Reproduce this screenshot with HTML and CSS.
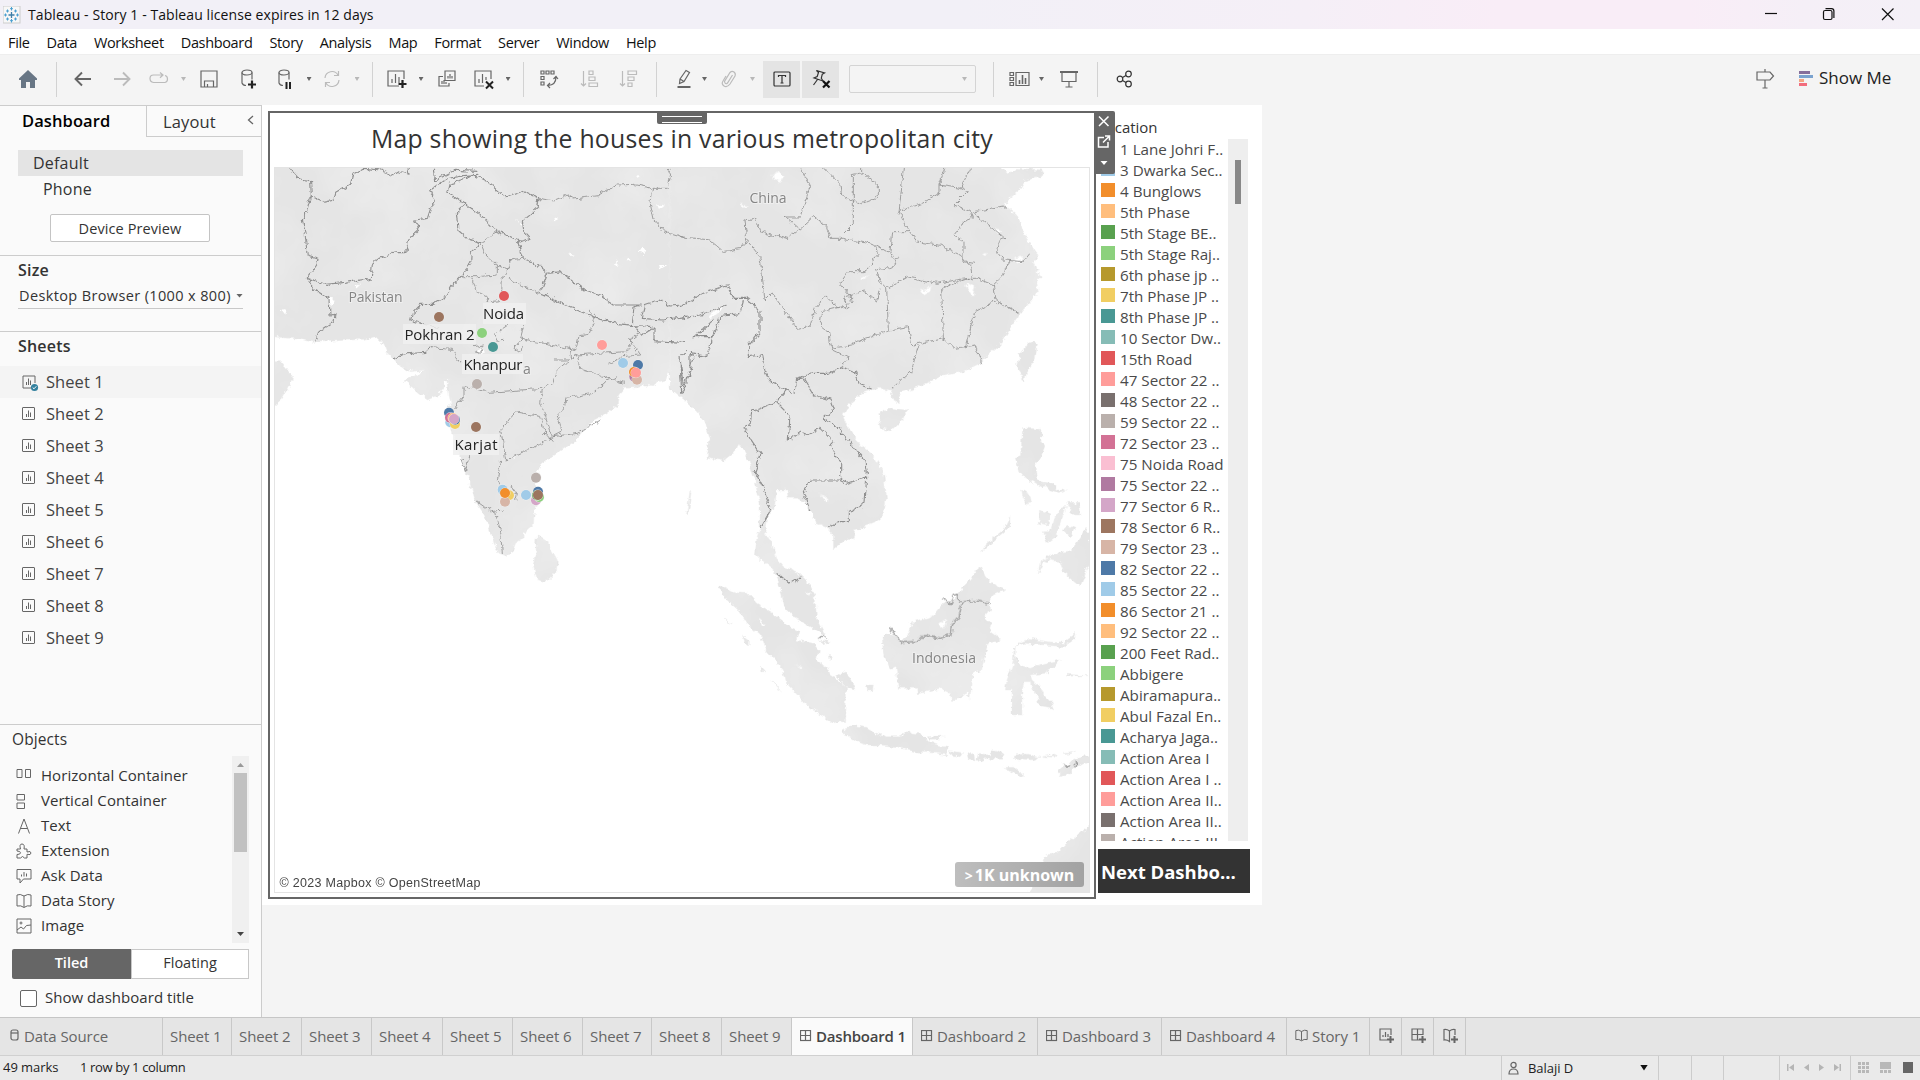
FILE: index.html
```html
<!DOCTYPE html>
<html lang="en">
<head>
<meta charset="utf-8">
<title>Tableau - Story 1</title>
<link rel="stylesheet" href="styles.css">
</head>
<body>
<svg class="defs" width="0" height="0">
  <symbol id="sheet" viewBox="0 0 14 14"><rect x=".5" y=".5" width="12" height="12" rx=".5"/><path d="M4.500 10V7M6.500 10V3.500M8.500 10V5.500"/></symbol>
  <symbol id="dash" viewBox="0 0 12 12"><rect x=".5" y=".5" width="10" height="10"/><path d="M5.500 .5v10M.5 5.500h10"/></symbol>
  <symbol id="book" viewBox="0 0 16 16"><path d="M8 3Q4 .5 1 2v11q4-1 7 1.500Q11 12 15 13V2q-3-1.500-7 1zM8 3v11"/></symbol>
</svg>

<header class="titlebar">
  <svg class="logo" width="18" height="18" viewBox="0 0 18 18"><rect width="17" height="17" fill="#f7f7f7" stroke="#ccc"/><path d="M8.500 6v6M5.500 9h6" stroke="#3f7fa8" stroke-width="1.300"/><path d="M8.500 1v3.500M7 2.700h3M8.500 13v3.500M7 14.700h3M1 9h3M2.500 7.500v3M13 9h3M14.500 7.500v3M4.500 3.500v3M3 5h3M12.500 3.500v3M11 5h3M4.500 11.500v3M3 13h3M12.500 11.500v3M11 13h3" stroke="#4a9fd0" fill="none"/></svg>
  <span class="title">Tableau - Story 1 - Tableau license expires in 12 days</span>
  <svg class="winbtns" width="130" height="16" viewBox="0 0 130 16" fill="none" stroke="#111" stroke-width="1.200"><path d="M0 7.500h12"/><rect x="58.500" y="4.500" width="8.500" height="9" rx="1.500"/><path d="M60.500 2.600h6q2.400 0 2.400 2.400v7"/><path d="M117 2.500l11.500 11.500M128.500 2.500L117 14"/></svg>
</header>

<nav class="menubar"><span>File</span><span>Data</span><span>Worksheet</span><span>Dashboard</span><span>Story</span><span>Analysis</span><span>Map</span><span>Format</span><span>Server</span><span>Window</span><span>Help</span></nav>

<div class="toolbar">
  <svg width="20" height="20" viewBox="0 0 20 20"><path d="M10 1L1 9.500V11h2v8h5v-6h4v6h5v-8h2V9.500z" fill="#687685"/></svg>
  <i class="sep"></i>
  <svg class="ic" width="18" height="16" viewBox="0 0 18 16"><path stroke-width="1.900" d="M1.500 8H17M8 1.500L1.500 8 8 14.500"/></svg>
  <svg class="ic off" width="18" height="16" viewBox="0 0 18 16"><path stroke-width="1.900" d="M1 8h15.500M10 1.500L16.500 8 10 14.500"/></svg>
  <svg class="ic off" width="20" height="14" viewBox="0 0 20 14"><path d="M14 3H4.500Q1 3 1 6.500T4.500 10.500H16q2.500-.5 2.500-3.500T16 3.500M11 .5L14 3l-3 2.700"/></svg>
  <i class="caret off"></i>
  <svg class="ic" width="18" height="18" viewBox="0 0 18 18"><path d="M1 1h16v16H1zM4.500 17v-6h9v6M7.500 17v-3"/></svg>
  <svg class="ic" width="18" height="22" viewBox="0 0 18 22"><ellipse cx="8" cy="4.500" rx="5" ry="2.500"/><path d="M3 4.500V15q1 2.500 4 2.500M13 4.500v7"/><path d="M13 12.500v8M9 16.500h8" stroke="#222" stroke-width="2.200"/></svg>
  <svg class="ic" width="18" height="22" viewBox="0 0 18 22"><ellipse cx="8" cy="4.500" rx="5" ry="2.500"/><path d="M3 4.500V15q1 2.500 4 2.500M13 4.500v7"/><path d="M10.500 14v7M14 14v7" stroke="#222" stroke-width="2"/></svg>
  <i class="caret"></i>
  <svg class="ic off" width="20" height="18" viewBox="0 0 20 18"><path d="M3 8a7 7 0 0 1 13-3M17 10A7 7 0 0 1 4 13M16.500 1v4.500H12M3.500 17v-4.500H8"/></svg>
  <i class="caret off"></i>
  <i class="sep"></i>
  <svg class="ic" width="20" height="20" viewBox="0 0 20 20"><path d="M17 10V2H1v15h11M5 14V10M8.500 14V5M12 14V8"/><path d="M15.500 11v8M11.500 15h8" stroke="#222" stroke-width="2.200"/></svg>
  <i class="caret"></i>
  <svg class="ic" width="18" height="18" viewBox="0 0 18 18"><path d="M7 1h10v9.500H7zM5 6.500H1V16h10v-3M10 8.500V6M12 8.500V4M14 8.500V6M4 14v-3M6 14v-4M8 14v-2"/></svg>
  <svg class="ic" width="20" height="20" viewBox="0 0 20 20"><path d="M17 10V2H1v15h9M5 14V10M8.500 14V5M12 11V8"/><path d="M12 12.500l7 7M19 12.500l-7 7" stroke="#222" stroke-width="2"/></svg>
  <i class="caret"></i>
  <i class="sep"></i>
  <svg class="ic" width="18" height="18" viewBox="0 0 18 18"><path d="M1 1h3v3H1zM6 1h3v3H6zM11 1h3v3h-3zM1 6.500h3v3H1zM1 12h3v3H1zM16 7q0 8-8 8.500M13.500 9L16 6.500 18 9M10 13l-2.500 2.500L10 18"/></svg>
  <svg class="ic off" width="18" height="18" viewBox="0 0 18 18"><path d="M3.500 1v15M1 13.500L3.500 16 6 13.500M9 1h4v3.500H9zM9 7h6v3.500H9zM9 13h8.500v3.500H9z"/></svg>
  <svg class="ic off" width="18" height="18" viewBox="0 0 18 18"><path d="M3.500 1v15M1 13.500L3.500 16 6 13.500M9 1h8.500v3.500H9zM9 7h6v3.500H9zM9 13h4v3.500H9z"/></svg>
  <i class="sep"></i>
  <svg class="ic" width="16" height="20" viewBox="0 0 16 20"><path d="M4 10L10 1.500l3.500 2L8 12.500l-4.500 2zM4 10l4 2.500"/><path d="M1.500 18h13" stroke-width="2"/></svg>
  <i class="caret"></i>
  <svg class="ic off" width="16" height="18" viewBox="0 0 16 18"><path d="M11.500 5L6.500 13q-1.500 1.500-2.500 0t0-2.500L9 2.500q2-2 4-.5t1 4L9 14q-3 4-6 2T2 11l3-5"/></svg>
  <i class="caret off"></i>
  <span class="on"><svg class="ic dark" width="18" height="18" viewBox="0 0 18 18"><rect x="1" y="2" width="16" height="14" rx="1"/><path d="M5.500 7V5.500h7V7M9 5.500v7.500M7.500 13h3"/></svg></span>
  <i></i>
  <span class="on"><svg class="ic dark" width="20" height="20" viewBox="0 0 20 20"><path d="M5.500 1.500l8 2.500-2.200 1.200-1 4L12 12 3 9l3.200-1.500L7.500 3.500zM6.500 10.500L2.500 16"/><path d="M12 12l6.500 6.500M18.500 12L12 18.500" stroke="#111" stroke-width="2.200"/></svg></span>
  <i></i>
  <span class="combo"><i class="caret off"></i></span>
  <i class="sep"></i>
  <svg class="ic" width="21" height="16" viewBox="0 0 21 16"><path d="M1 1.500h3.500v3H1zM1 6.500h3.500v3H1zM1 11.500h3.500v3H1zM7 1.500h13v13H7z"/><path d="M10.500 13V9M13.500 13V4M16.500 13V7" stroke-width="1.600"/></svg>
  <i class="caret"></i>
  <svg class="ic" width="18" height="18" viewBox="0 0 18 18"><path d="M2 2.500v9h14v-9M9 11.500V17M5.500 17h7"/><path d="M0 2h18" stroke-width="2"/></svg>
  <i class="sep"></i>
  <svg class="ic dark" width="17" height="18" viewBox="0 0 17 18"><circle cx="4" cy="9" r="2.800"/><circle cx="12.500" cy="4" r="2.800"/><circle cx="12.500" cy="14" r="2.800"/><path d="M6.500 7.500l3.500-2M6.500 10.500l3.500 2"/></svg>
  <i></i>
  <svg class="ic" width="19" height="20" viewBox="0 0 19 20"><path d="M9 0v3M1 3h13l3.500 4-3.500 4H1zM9 11v8M6.500 19h5"/></svg>
  <span class="showme"><svg width="14" height="16" viewBox="0 0 14 16"><path d="M0 0h11v3H0z" fill="#866f9b"/><path d="M0 4h14v3H0z" fill="#7ba3cf"/><path d="M0 8h5v3H0z" fill="#f3a683"/><path d="M0 12h8v3H0z" fill="#f26d7d"/></svg><span>Show Me</span></span>
</div>

<main class="work">
  <aside class="side">
    <div class="sidetabs"><b>Dashboard</b><span>Layout<svg class="ic" width="7" height="10" viewBox="0 0 7 10"><path d="M6 0L1.500 4 6 8" stroke-width="1.300"/></svg></span></div>
    <div class="device">
      <div class="default">Default</div>
      <div class="phone">Phone</div>
      <div class="preview">Device Preview</div>
    </div>
    <div class="size"><h3>Size</h3><div class="select"><span>Desktop Browser (1000 x 800)</span><i class="caret"></i></div></div>
    <div class="sheets"><h3>Sheets</h3>
      <div class="sh hot"><svg class="ic" width="18" height="18" viewBox="0 0 18 18"><path d="M9 13H1V1h12v7M4.500 10V7M6.500 10V3.500M8.500 10V5.500"/><circle cx="12.500" cy="12.500" r="3.600" fill="#32809e" stroke="none"/><path d="M10.700 12.500l1.300 1.300 2.300-2.500" stroke="#fff"/></svg>Sheet 1</div>
      <div class="sh"><svg class="ic"><use href="#sheet" width="14" height="14"/></svg>Sheet 2</div>
      <div class="sh"><svg class="ic"><use href="#sheet" width="14" height="14"/></svg>Sheet 3</div>
      <div class="sh"><svg class="ic"><use href="#sheet" width="14" height="14"/></svg>Sheet 4</div>
      <div class="sh"><svg class="ic"><use href="#sheet" width="14" height="14"/></svg>Sheet 5</div>
      <div class="sh"><svg class="ic"><use href="#sheet" width="14" height="14"/></svg>Sheet 6</div>
      <div class="sh"><svg class="ic"><use href="#sheet" width="14" height="14"/></svg>Sheet 7</div>
      <div class="sh"><svg class="ic"><use href="#sheet" width="14" height="14"/></svg>Sheet 8</div>
      <div class="sh"><svg class="ic"><use href="#sheet" width="14" height="14"/></svg>Sheet 9</div>
    </div>
    <div class="objects">
      <h4>Objects</h4>
      <div class="objbox">
        <div class="objlist">
          <div><svg class="ic" viewBox="0 0 16 16"><path d="M1 1.500h5v8H1zM9.500 1.500h5v8h-5z"/></svg>Horizontal Container</div>
          <div><svg class="ic" viewBox="0 0 16 16"><path d="M1 1.500h7.500V7H1zM1 10h7.500v5.500H1z"/></svg>Vertical Container</div>
          <div><svg class="ic" viewBox="0 0 16 16"><path d="M2.500 15.500L8 1l5.500 14.500M4.500 10.500h7"/></svg>Text</div>
          <div><svg class="ic" viewBox="0 0 16 16"><path d="M1 6h3.500Q3 1 6 1t2 5h3v3q4-1.500 4 1t-4 1.300V15H8.500q-2-3-4 0H1v-3.500q3.500 0 3.500-1.700T1 8z"/></svg>Extension</div>
          <div><svg class="ic" viewBox="0 0 16 16"><path d="M1 1.500h14v9.500H7.500L4 15v-4H1zM5.500 8.500v-2M8 8.500V4M10.500 8.500V5.500"/></svg>Ask Data</div>
          <div><svg class="ic" viewBox="0 0 16 16"><use href="#book" width="16" height="16"/></svg>Data Story</div>
          <div><svg class="ic" viewBox="0 0 16 16"><path d="M1 1h14v14H1zM1 12l4-3 2.500 2 3-3.500L15 7"/><circle cx="5" cy="5" r="1"/></svg>Image</div>
        </div>
        <div class="scroll"><i class="up"></i><i class="thumb"></i><i class="down"></i></div>
      </div>
      <div class="toggle"><b>Tiled</b><span>Floating</span></div>
      <div class="check"><i></i><span>Show dashboard title</span></div>
    </div>
  </aside>

  <section class="canvas">
    <div class="zone">
      <div class="grip"></div>
      <h1>Map showing the houses in various metropolitan city</h1>
      <div class="map">
        <svg width="814" height="724" viewBox="275 168 814 724">
          <defs>
            <filter id="rough" x="0" y="0" width="100%" height="100%"><feTurbulence type="fractalNoise" baseFrequency=".18" numOctaves="3" seed="4"/><feDisplacementMap in="SourceGraphic" scale="6" xChannelSelector="R" yChannelSelector="G"/></filter>
            <filter id="relief" x="0" y="0" width="100%" height="100%"><feTurbulence type="fractalNoise" baseFrequency=".014" numOctaves="4" seed="9"/><feColorMatrix values="0 0 0 0 1  0 0 0 0 1  0 0 0 0 1  1.400 0 0 0 -.5"/><feComposite operator="in" in2="SourceGraphic"/></filter>
            <g id="land">
              <path transform="translate(264 105) scale(.33333)" d="M0 150H1270V890L1255 870 1240 830 1225 805 1215 800 1205 825 1185 830 1165 842 1140 840 1115 848 1085 850 1067 870 1063 900 1020 930 990 945 960 975 930 1010 895 1035 850 1065 830 1080 818 1105 815 1150 825 1180 812 1215 808 1262 788 1278 778 1300 755 1315 745 1340 725 1352 705 1345 690 1315 680 1280 655 1220 632 1185 620 1140 608 1105 590 1060 570 1000 560 965 545 930 550 905 562 900 555 870 552 825 540 825 540 850 525 870 490 885 465 865 420 825 430 820 470 805 480 795 440 800 405 780 385 757 370 745 360 720 335 695 300 703 150 712 100 702 0 693zM0 770H50L90 820 70 850 40 900 0 870zM820 1290L850 1310 880 1365 878 1400 845 1430 820 1425 808 1380 815 1340z"/>
              <path transform="translate(680 105) scale(.33333)" d="M-30 150H965V186L985 205 1010 190 1090 195 1085 215 1040 225 1025 250 990 280 975 300 1010 330 1040 400 1065 440 1075 450 1060 470 1070 495 1085 515 1070 530 1075 560 1050 590 1020 630 990 670 960 720 935 740 900 775 850 800 780 815 740 835 700 850 665 860 655 875 660 895 645 895 635 860 600 850 575 855 545 865 525 885 500 905 490 940 500 960 540 1020 580 1050 610 1100 620 1180 610 1230 580 1255 525 1275 520 1300 490 1310 460 1335 460 1290 440 1265 405 1250 390 1220 375 1190 350 1180 325 1180 320 1155 290 1155 285 1200 260 1240 255 1280 275 1310 290 1360 310 1385 350 1400 390 1440 405 1470 410 1540 437 1592 400 1570 340 1535 315 1510 300 1450 290 1410 270 1385 240 1365 226 1350 230 1300 240 1270 240 1190 225 1130 205 1060 180 1018 165 1040 130 1067 80 1060 90 1000 75 950 50 920 20 890 -30 850z"/>
              <path transform="translate(680 105) scale(.33333)" d="M1055 710l18 5-8 50-25 40-6 28-12-25-10-25 10-40 22-28zM610 915l25-5 45 5-10 25-35 35-30-5-8-30zM1028 968l55 5 0 30 12 20-15 40-15 20 5 40 30 15-12 12-30-20-25-10-15-20-12-40 15-5 5-60zM1025 1155l25 15 5 25-15 3-12-25zM1085 1130l30 5 20 20 25 0-25 8-30-10zM1160 1195l38 0 5 35-20 0-15-15zM1078 1215l35 15-10 30-25-5zM1145 1205l15 0-20 50-15 45-20 15-15-35 20 0 15-45zM1160 1260l25 10-15 25-20-15zM1075 1410l5-40 30-20 60-10 30-40 15-30 15 20v85l-30 70-30-25-20-20-10-30-35-5-15 10zM990 1235l0 30-35 30-50 45 15-25 50-40zM30 1155l3 10-8 65-5-3z"/>
              <path transform="translate(680 560) scale(.33333)" d="M115 85l15-5 30 15 40 2 30 33 50 30 50 40 30 15-10 25 50 10 15 20-5 30 30 20 10 25 30 20 20 15-3 108-17-3-25 5-25-20-55-40-55-60-10-40-55-65-15-40-40-35-20-35-45-40zM470 350l20-15 15 10 15 30 5 13-25-8zM560 375l20 0-2 15-16 0zM500 498l30 0 30 4 30 18 30 10 40 0 20-18 20 10 30 3 20 25 50 12 3 23-33-5-70-5-50-15-50-5-40 0-30-10-30-20-15-5zM745 530l45-2-10 9-30 1zM808 572l40 6-8 14-25-7zM862 585l20-5 3 20-20-3zM890 600l5-20 30 5 15-13 30 8-5 15-35 0-25 10zM1000 585l40-3 40 10-20 8-60-5zM1085 590l45-8-5 10zM1150 580l40-3-35 7zM970 622l30 0 35 23-15 5-35-20zM1135 650l5-20 30-25 30-15h32v15l-42 15-25 25zM607 240l8-15 25 0 25 20 20-25 10-35 60-15 35-40 40-15 15-30 25-25 20-30 15-10 10 25 20 25 40 20-35 15-15 25 5 20-15 20 20 25-5 20 35 25-40 10-10 35-10 45-25 10-5 40-5 35-10-15-45 25-5-25-30-15-40 10-28 7-2-17-55 0-7-65-18 5-20-45zM1000 300l2-35 20-20 30-10 50 10 50 5 15-15 22-15-8 20-30 20-60-5-60-5-25 10 0 30 10 25 35 10 40-15 50-10-15 20-30 20-45 5 5 15 25 20 10 25 20 20 10 25-15-5-25-5-10-35-15-20-5-20-20 0-5 30 0 70-30 0 0-75-20 0 5-30 15-40zM132 178l25 14-15-5zM188 228l20 15 0 12-15-10zM240 318l18 20-15 0zM272 358l30 35-20-20zM415 240l35 5-10 10zM445 285l10 5-8 12zM1160 343l68 4-68 2zM1240 790l-70 50-40 40-30 0-15 30 5 30-45 57v30h195z"/>
            </g>
          </defs>
          <g filter="url(#rough)"><use href="#land" fill="#e5e5e5" stroke="#efefef" stroke-width="1.500"/></g>
          <g filter="url(#relief)" opacity=".38"><use href="#land"/></g>
          <g filter="url(#rough)" fill="#fff">
            <g transform="translate(264 105) scale(.33333)"><path d="M1115 210l15 3-10 5zM1180 300l20 5-15 8zM1125 440l10-15 15 10-10 15zM1185 480l25 0-20 12zM1050 480l12-18-2 20zM915 445l15 5-10 3zM1085 465l5-8 12 10zM755 345l25 15-5 4zM868 340l12 5-10 5zM190 580l25 5-10 15zM265 545l25-10-12 12zM50 615l15-3-5 16zM640 740l15-15 10 15-15 10zM740 1060l15-8-5 12z"/></g>
            <g transform="translate(680 105) scale(.33333)"><path d="M275 210l18-10 20 15-8 15-25-8zM180 300l28 3-22 5zM720 550l15 8 18-18-3 18-20 10zM860 535l25 10-8 30-15-20zM905 445l20 0-10 8zM1003 460l20-5 8 15-20 5zM945 370l18 5-10 12zM85 635l35-30 20-5-50 40zM420 1165l25 18-5 8zM540 520l35-15-30 20z"/></g>
            <g transform="translate(680 560) scale(.33333)"><path d="M235 175l18 15-8 5zM778 190l20-12-5 25zM378 97l14-2-4 12zM345 315l25 8-5 3z"/></g>
          </g>
          <g filter="url(#rough)" fill="none" stroke="#8f8f8f" stroke-width="3.400" stroke-linejoin="round">
            <g transform="translate(264 105) scale(.33333)">
              <path d="M75 186L90 205 108 225 140 230 142 275 180 292 210 285 215 265 262 238 270 208 300 190 350 195 390 212 410 200 435 208 432 186M140 275L130 310 115 345 122 375 130 450 162 460 158 480 130 520 185 538 245 532 322 520 325 475 345 460 400 440 425 440 435 400 465 375 452 345 490 340 500 310 515 290 500 255 545 222 600 212 640 208M130 520L150 555 195 582 198 630 213 628 210 650 165 680 155 710M510 186l5 40 60-30 65 3M625 208L670 230 725 278 780 258 825 280 820 310 775 350 780 380 798 400 770 412 740 395 700 380 655 335 605 297 550 260 555 238 590 228 625 208M605 297L580 320 585 378 610 400 650 415 622 440 620 475 595 510 560 545 540 580 510 598 470 598 445 625 440 645 470 655 525 668M760 405l15 55 40 15 35 30-20 55M850 505L890 500 960 555 1010 570 1050 600 1130 600M820 562L860 580 930 612 1000 640 1060 655 1110 662 1165 665M1130 600l-20 5-5 55M1145 600l-10 40 60 5 65-10M1140 600l45-15 30 18 45-3M1110 662l25 30 35-25 0 40 90 5M390 762l30-15 65-5 15-15"/>
              <path stroke-width="2.500" d="M825 280L870 288 910 270 930 282 1000 272 1060 240 1110 238 1165 250 1212 250 1220 210 1210 186M1165 250L1158 290 1170 345 1200 380 1260 398M650 415L665 450 700 480 700 510 640 515 595 515M650 415l50-38M700 480l30 15 10-30 35-5M730 500l-15 20-3 60M735 520l45 25 40 20M620 520l20 40 30 15 5 15 30-3M500 728l65 5 25 45M780 658l-10 40 30 10 60 10 45 10 30 10 10-45 30-5 20-55-20-15M735 658l-45 30 10 20 20-2M775 700l-25 30 20 15 5-25M630 725l30-5-10 25-20-5M915 725l5 35 20-10 60-5 90-5 15-40 20-15M940 755l15 40 65 20 60 20M1030 780l45-25 55-5-35-50M870 765l45 0-35 30-15 40-30 15-160 12-75-20 0 30-30 40M835 855l-5 40 20 55 15 45 30-15-15-50 20-15 5-35 80-15 40-35 35-15M865 995l75-10 70-40M865 995l-30 20-90 40-20 10-15-90 45-55 75 15 10 45 25 30M710 1065l-10 60 10 15M590 1060l15 40 10-50M632 1185l50 35 35-5M695 1222l15 60 5 65M740 1140l20 30-5 15M605 860l-5-10"/>
            </g>
            <g transform="translate(680 105) scale(.33333)">
              <path stroke-width="2.500" d="M0 395L90 405 130 440 185 430 200 405 195 345 225 340 240 380 320 402 360 370 400 335 440 365 450 400 490 400 585 420 650 460 640 485 590 495 600 530 620 550 680 515 770 535 830 525 865 520 890 520 940 540 950 590 1020 625M360 186l30 60-30 90-45 0 40 35M200 405l40 50 15 130 20-20 80 108 35-10 15-50 30-40 40 35 35 0-20-30 60-20 40 30 10-40M430 186l50 50 5 35 35 20 0-80 30-5 45 35 0 35-50 20-25-10 0 70-30 30M545 205v-19M670 186l-5 60-8 75 25 50 30 40 70 10 60 30 30 30 5 45M657 320l70-25 50-30 0-25 20-55M777 240l65 10 30-64M842 250l20 10-40 40 50 20 5 20-25 10-30 40 30 20 0 60 30 5M880 320l100-15M880 325l60 45 35 30-20 10-5 30 20 25 60 5 20-25M990 465l-20 45-30 30M585 420l10 30-40 50-50 0-25 35 30 35 5 30M620 550l5 125-70 25-40 20-60 10-10-50-25-20 5-40 60-15M450 730l60 30-30 25M625 675l60-10 10 55 100-20 30 30 60-10 20 55M790 700l-5-150 80-30M715 720l-20 80-60 50M855 730l30-110 60-30M630 440l5-60 50 0"/>
              <path d="M0 605L70 565 140 540 160 580 200 580 225 600 240 620 240 680 205 720 205 755 245 750 255 800 270 830 320 855 345 865 350 820 400 805 450 805 485 785 525 800 540 840 575 852M350 820L370 820 400 870 450 885 460 915 430 940 475 970 520 1025 555 1070 560 1115 500 1135 480 1125M320 855L290 890 330 930 325 1005 360 980 385 990 420 970 450 1000 465 1050 485 1070 485 1125 390 1125 370 1160 390 1220M290 890L215 920 210 960 192 968 215 1010 242 1050 225 1100 250 1150 272 1215 240 1270M560 1115l-5 80-50 25 0 30-30 0-30 18M0 640l60-10 80-30M190 585l-10 40-60 10-20 60-60 0 60 0-20 60-50-10 0 50-20 50-10-90 20-20M40 755l-20 80-15 30-5-100M45 695l60-55M290 1402l40 35 30-18"/>
            </g>
            <g transform="translate(680 560) scale(.33333)"><path d="M630 205l35 43 50-5 20-20 45 12 32-10 5-30 20-25 10-45 40-3 45 8M790 112l20 22 10-28 15-3 3 20M415 235l15-8 10 8M1150 612l12 10 5-10M1185 605l3 12 5-8"/></g>
          </g>
          <g class="country"><text x="348.500" y="302" textLength="54">Pakistan</text><text x="749.500" y="203" textLength="37">China</text><text x="912" y="663" textLength="64">Indonesia</text><text x="523" y="374">a</text></g>
          <g fill="#f0f0f0" fill-opacity=".85"><path d="M483 303h43v21h-43zM403 324h73v20h-73zM462 354h61v20h-61zM453 434h46v21h-46z"/></g>
          <g class="dots" transform="translate(264 105) scale(.33333)">
            <circle cx="720" cy="573" r="15" fill="#e15759"/><circle cx="525" cy="636" r="15" fill="#9c755f"/><circle cx="654" cy="684" r="15" fill="#8cd17d"/><circle cx="687" cy="726" r="15" fill="#499894"/><circle cx="1014" cy="720" r="15" fill="#ff9d9a"/><circle cx="1077" cy="774" r="15" fill="#a0cbe8"/><circle cx="1111" cy="815" r="15" fill="#b07aa1"/><circle cx="1122" cy="780" r="15" fill="#4e79a7"/><circle cx="1119" cy="824" r="15" fill="#d7b5a6"/><circle cx="1110" cy="801" r="15" fill="#f28e2b"/><circle cx="1116" cy="803" r="15" fill="#ff9d9a"/>
            <circle cx="639" cy="837" r="15" fill="#bab0ac"/><circle cx="555" cy="923" r="15" fill="#4e79a7"/><circle cx="559" cy="952" r="15" fill="#a0cbe8"/><circle cx="573" cy="957" r="15" fill="#f1ce63"/><circle cx="573" cy="944" r="15" fill="#4e79a7"/><circle cx="558" cy="938" r="15" fill="#d37295"/><circle cx="567" cy="939" r="15" fill="#ffbe7d"/><circle cx="570" cy="942" r="15" fill="#d4a6c8"/><circle cx="636" cy="966" r="15" fill="#9c755f"/>
            <circle cx="816" cy="1118" r="15" fill="#bab0ac"/><circle cx="716" cy="1154" r="15" fill="#a0cbe8"/><circle cx="735" cy="1171" r="15" fill="#f1ce63"/><circle cx="723" cy="1190" r="15" fill="#d7b5a6"/><circle cx="723" cy="1164" r="15" fill="#f28e2b"/><circle cx="786" cy="1170" r="15" fill="#a0cbe8"/><circle cx="816" cy="1186" r="15" fill="#d4a6c8"/><circle cx="825" cy="1176" r="15" fill="#8cd17d"/><circle cx="822" cy="1160" r="15" fill="#4e79a7"/><circle cx="819" cy="1171" r="15" fill="#59a14f"/><circle cx="822" cy="1170" r="15" fill="#9c755f"/>
          </g>
          <g class="mark"><text x="483" y="319" textLength="41">Noida</text><text x="404.500" y="340" textLength="70">Pokhran 2</text><text x="463.500" y="370" textLength="59">Khanpur</text><text x="454.500" y="450" textLength="43">Karjat</text></g>
          <text x="279.500" y="887" class="credit" textLength="201">© 2023 Mapbox © OpenStreetMap</text>
        </svg>
        <div class="unknown"><span>&gt;</span>1K unknown</div>
      </div>
      <div class="tools"><svg width="21" height="63" viewBox="0 0 21 63" fill="none" stroke="#fff" stroke-width="1.500"><path d="M5 5.500l9.500 9.500M14.500 5.500L5 15M10 26.500H4.500v9.500H14V31M9 31.500l6-6M11 25h4.500v4.500"/><path d="M6.500 50h7L10 54z" fill="#fff" stroke="none"/></svg></div>
    </div>
    <div class="rail">
      <div class="ltitle">Location</div>
      <div class="legend">
        <div class="items">
          <div><i class="c0"></i>1 Lane Johri F..</div><div><i class="c1"></i>3 Dwarka Sec..</div><div><i class="c2"></i>4 Bunglows</div><div><i class="c3"></i>5th Phase</div><div><i class="c4"></i>5th Stage BE..</div><div><i class="c5"></i>5th Stage Raj..</div><div><i class="c6"></i>6th phase jp ..</div><div><i class="c7"></i>7th Phase JP ..</div><div><i class="c8"></i>8th Phase JP ..</div><div><i class="c9"></i>10 Sector Dw..</div><div><i class="c10"></i>15th Road</div><div><i class="c11"></i>47 Sector 22 ..</div><div><i class="c12"></i>48 Sector 22 ..</div><div><i class="c13"></i>59 Sector 22 ..</div><div><i class="c14"></i>72 Sector 23 ..</div><div><i class="c15"></i>75 Noida Road</div><div><i class="c16"></i>75 Sector 22 ..</div><div><i class="c17"></i>77 Sector 6 R..</div><div><i class="c18"></i>78 Sector 6 R..</div><div><i class="c19"></i>79 Sector 23 ..</div><div><i class="c0"></i>82 Sector 22 ..</div><div><i class="c1"></i>85 Sector 22 ..</div><div><i class="c2"></i>86 Sector 21 ..</div><div><i class="c3"></i>92 Sector 22 ..</div><div><i class="c4"></i>200 Feet Rad..</div><div><i class="c5"></i>Abbigere</div><div><i class="c6"></i>Abiramapura..</div><div><i class="c7"></i>Abul Fazal En..</div><div><i class="c8"></i>Acharya Jaga..</div><div><i class="c9"></i>Action Area I</div><div><i class="c10"></i>Action Area I ..</div><div><i class="c11"></i>Action Area II..</div><div><i class="c12"></i>Action Area II..</div><div><i class="c13"></i>Action Area III..</div>
        </div>
        <div class="lscroll"><i></i></div>
      </div>
      <div class="next">Next Dashbo...</div>
    </div>
  </section>
</main>

<footer class="tabs">
  <div><svg class="ic" width="10" height="13" viewBox="0 0 10 13"><rect x="1" y="1" width="7" height="10" rx="2"/><path d="M1 4h7"/></svg>Data Source</div>
  <div>Sheet 1</div><div>Sheet 2</div><div>Sheet 3</div><div>Sheet 4</div><div>Sheet 5</div><div>Sheet 6</div><div>Sheet 7</div><div>Sheet 8</div><div>Sheet 9</div>
  <div class="cur"><svg class="ic" width="12" height="12"><use href="#dash" width="12" height="12"/></svg>Dashboard 1</div>
  <div><svg class="ic" width="12" height="12"><use href="#dash" width="12" height="12"/></svg>Dashboard 2</div>
  <div><svg class="ic" width="12" height="12"><use href="#dash" width="12" height="12"/></svg>Dashboard 3</div>
  <div><svg class="ic" width="12" height="12"><use href="#dash" width="12" height="12"/></svg>Dashboard 4</div>
  <div><svg class="ic" width="13" height="13"><use href="#book" width="13" height="13"/></svg>Story 1</div>
  <div class="add"><svg class="ic" width="16" height="16" viewBox="0 0 16 16"><path d="M12 7V1H1v11h7M4 9V7M6.500 9V4M9 9V6"/><path d="M11.500 8v7M8 11.500h7" stroke-width="2"/></svg></div>
  <div class="add"><svg class="ic" width="16" height="16" viewBox="0 0 16 16"><path d="M12 7V1H1v11h7M6.500 1v11M1 6.500h11"/><path d="M11.500 8v7M8 11.500h7" stroke-width="2"/></svg></div>
  <div class="add"><svg class="ic" width="16" height="16" viewBox="0 0 16 16"><path d="M12 7V1.500Q9 1 6.500 3 4 1 1 1.500V12q3-.5 5.500 1.500V3"/><path d="M11.500 8v7M8 11.500h7" stroke-width="2"/></svg></div>
  <div></div>
</footer>

<footer class="status">
  <span>49 marks</span><span class="size-note">1 row by 1 column</span>
  <div class="user"><svg class="ic" width="11" height="14" viewBox="0 0 11 14"><circle cx="5.500" cy="4" r="2.600"/><path d="M1 13q0-5 4.500-5T10 13z"/></svg><span>Balaji D</span><i class="caret"></i></div>
  <div></div><div></div><div></div>
  <div class="nav"><svg width="56" height="9" viewBox="0 0 56 9" fill="#b5b5b5"><path d="M0 1h1.500v7H0zM7 1v7L2 4.500zM22 1v7l-5-3.500zM32 1v7l5-3.500zM47 1v7l5-3.500zM52.500 1H54v7h-1.500z"/></svg></div>
  <div class="views"><svg width="56" height="12" viewBox="0 0 56 12"><g fill="#b8b8b8"><path d="M0 0h3v3H0zM4 0h3v3H4zM8 0h3v3H8zM0 4h3v3H0zM4 4h3v3H4zM8 4h3v3H8zM0 8h3v3H0zM4 8h3v3H4zM8 8h3v3H8zM22 0h11v7H22zM22 8h3v3h-3zM26 8h3v3h-3zM30 8h3v3h-3z"/></g><path d="M45 0h10v11H45z" fill="#666"/></svg></div>
</footer>
</body>
</html>
```

FILE: styles.css
```css
* { box-sizing: border-box; }
body { margin: 0; width: 1920px; height: 1080px; overflow: hidden; display: flex; flex-direction: column; font-family: "Open Sans", "Noto Sans", sans-serif; font-size: 15px; color: #333; background: #f4f4f4; }
h1, h3, h4 { margin: 0; font-weight: 400; }
i { font-style: normal; display: block; }
.defs { position: absolute; }
.ic { fill: none; stroke: #666; stroke-width: 1.2; overflow: visible; flex: none; }
.ic.off { stroke: #bbb; }
.ic.dark { stroke: #333; }
.caret { width: 5px; height: 4px; background: #666; clip-path: polygon(0 0, 100% 0, 50% 100%); flex: none; }
.caret.off { background: #b8b8b8; }

.titlebar { height: 29px; flex: none; display: flex; align-items: center; padding: 0 25px 0 3px; background: linear-gradient(90deg, #f2f0f7 0 50%, #f5eff7 68%, #f9edf7 78%, #f9edf7 88%, #f5eff7 94%, #f4f0f7); }
.title { margin-left: 7px; font-size: 14px; letter-spacing: .08px; color: #111; }
.winbtns { margin: -2px 0 0 auto; }

.menubar { height: 25px; flex: none; background: #fff; display: flex; gap: 17px; padding-left: 8px; line-height: 27px; font-size: 14.5px; letter-spacing: -.35px; color: #111; }

.toolbar { height: 51px; flex: none; background: #f4f4f4; border-top: 1px solid #eee; padding-bottom: 2px; display: grid; align-items: center; justify-items: center;
  grid-template-columns: 56px 1px 52px 26px 48px 1px 50px 28px 46px 2px 44px 6px 25px 24px 24px 27px 47px 2px 29px 22px 58px 20px 36px 19px 23px 26px 21px 37px 2px 37px 10px 127px 35px 17px 27px 27px 31px 23px 1fr 24px 143px; }
.sep { width: 1px; height: 35px; background: #d2d2d2; }
.on { width: 37px; height: 37px; background: #e4e4e4; display: grid; place-items: center; }
.combo { width: 127px; height: 28px; border: 1px solid #d4d4d4; border-radius: 2px; display: flex; align-items: center; justify-content: flex-end; padding-right: 8px; }
.showme { justify-self: stretch; padding-left: 22px; display: flex; align-items: center; gap: 6px; font-size: 17px; color: #222; }
.showme span { line-height: 22px; padding-bottom: 2px; }

.work { flex: 1; min-height: 0; display: flex; }
.side { width: 262px; background: #fafafa; border-right: 1px solid #ccc; display: flex; flex-direction: column; flex: none; }
.sidetabs { height: 32px; border-top: 1px solid #ccc; display: flex; flex: none; }
.sidetabs b { width: 146px; padding-left: 22px; line-height: 29px; font-size: 16.5px; letter-spacing: .1px; font-weight: 600; color: #000; }
.sidetabs span { flex: 1; border-left: 1px solid #ccc; border-bottom: 1px solid #ccc; padding: 0 7px 0 16px; display: flex; align-items: center; justify-content: space-between; font-size: 16.5px; letter-spacing: .15px; }
.device { height: 119px; padding: 13px 18px 0; border-bottom: 1px solid #ccc; font-size: 16px; letter-spacing: .2px; flex: none; }
.default { height: 26px; line-height: 27px; background: #e4e4e4; padding-left: 15px; }
.phone { height: 26px; line-height: 27px; padding-left: 25px; }
.preview { width: 160px; height: 28px; margin: 12px 0 0 32px; border: 1px solid #c4c4c4; border-radius: 2px; text-align: center; line-height: 27px; font-size: 14.5px; letter-spacing: .1px; background: #fff; }
.side h3 { font-size: 16px; font-weight: 600; letter-spacing: .2px; }
.size { height: 76px; padding: 2px 18px 0; border-bottom: 1px solid #ccc; flex: none; }
.select { height: 27px; padding-top: 1px; border-bottom: 1px solid #c8c8c8; display: flex; align-items: center; justify-content: space-between; font-size: 14.5px; letter-spacing: .37px; }
.select span { padding-left: 1px; }
.select .caret { width: 7px; }
.sheets { padding-top: 2px; flex: 1; }
.size h3, .sheets h3 { line-height: 24px; }
.sheets h3 { margin: 0 0 8px 18px; }
.sh { height: 32px; display: flex; align-items: center; font-size: 16.5px; color: #444; padding: 0 0 2px 22px; letter-spacing: .05px; }
.sh svg { width: 18px; height: 14px; margin: 2px 6px 0 0; stroke-width: 1; }
.sh:first-of-type svg { height: 18px; margin-top: 6px; }
.hot { background: #f4f4f4; }
.objects { height: 293px; border-top: 1px solid #ccc; flex: none; padding-left: 12px; }
.objects h4 { font-size: 15.5px; line-height: 28px; height: 30px; font-weight: 500; letter-spacing: .1px; }
.objbox { display: flex; justify-content: space-between; width: 237px; height: 187px; margin-top: 1px; }
.objlist { padding: 6px 0 0 4px; }
.objlist div { display: flex; align-items: center; height: 25px; font-size: 15px; letter-spacing: .06px; }
.objlist svg { width: 16px; height: 16px; margin: 2px 9px 0 0; stroke-width: 1; }
.scroll { width: 17px; background: #f0f0f0; display: flex; flex-direction: column; align-items: center; padding: 7px 0; }
.up { width: 7px; height: 4px; background: #999; clip-path: polygon(50% 0, 100% 100%, 0 100%); }
.thumb { width: 13px; height: 79px; background: #c1c1c1; margin-top: 6px; }
.down { width: 7px; height: 4px; background: #444; clip-path: polygon(0 0, 100% 0, 50% 100%); margin-top: auto; }
.toggle { display: flex; width: 237px; height: 30px; margin-top: 6px; text-align: center; line-height: 26px; font-size: 14.5px; }
.toggle b { width: 119px; background: #666; color: #fff; font-weight: 600; border-radius: 2px 0 0 2px; line-height: 28px; }
.toggle span { flex: 1; border: 1px solid #c8c8c8; background: #fff; }
.check { display: flex; align-items: center; height: 38px; padding-left: 8px; gap: 8px; font-size: 15px; letter-spacing: .03px; }
.check span { padding-bottom: 2px; }
.check i { width: 17px; height: 17px; border: 1px solid #666; border-radius: 2px; background: #fff; }

.canvas { width: 1000px; height: 800px; background: #fff; display: flex; padding: 6px; position: relative; }
.zone { width: 828px; height: 788px; border: 2px solid #666; padding: 0 4px 4px; position: relative; z-index: 1; }
.grip { position: absolute; left: 387px; top: 0; width: 50px; height: 11px; background: #666; border-radius: 0 0 2px 2px; }
.grip::after { content: ""; position: absolute; left: 5px; right: 5px; top: 3px; height: 5px; border: solid #fff; border-width: 1px 0; }
.zone h1 { height: 54px; line-height: 51px; text-align: center; font-size: 24.8px; letter-spacing: .24px; color: #333; white-space: nowrap; }
.map { width: 816px; height: 726px; border: 1px solid #e4e4e4; position: relative; overflow: hidden; }
.map > svg { display: block; }
.country text { font-size: 14px; fill: #858585; paint-order: stroke; stroke: #efefef; stroke-width: 2px; }
.mark text { font-size: 15px; fill: #222; }
.dots circle { stroke: #f3f3f3; stroke-width: 3; stroke-opacity: .75; paint-order: stroke; }
.credit { font: 12.5px "Liberation Sans", sans-serif; fill: #444; }
.unknown { position: absolute; right: 5px; bottom: 5px; width: 129px; height: 25px; border-radius: 3px; background: linear-gradient(90deg, #bebebe, #a2a2a2); color: #fff; font-weight: 700; font-size: 16px; line-height: 26px; text-align: center; letter-spacing: 0; white-space: nowrap; }
.unknown span { font-size: 14px; margin-right: 2px; }
.tools { position: absolute; left: 824px; top: -2px; width: 21px; height: 63px; background: #666; border-radius: 0 2px 2px 0; }
.tools svg { display: block; }
.rail { width: 154px; padding-left: 2px; }
.ltitle { height: 28px; line-height: 33px; font-size: 15px; letter-spacing: -.05px; }
.legend { height: 702px; display: flex; justify-content: space-between; width: 150px; overflow: hidden; }
.items { padding-left: 3px; width: 129px; margin-top: -1px; }
.items div { height: 21px; line-height: 22px; display: flex; align-items: center; font-size: 15.2px; white-space: nowrap; color: #4a4a4a; }
.items i { width: 14px; height: 14px; margin: -1px 5px 0 0; flex: none; }
.lscroll { width: 20px; background: #eee; padding: 21px 0 0 7px; }
.lscroll i { width: 6px; height: 44px; background: #888; }
.next { width: 152px; height: 44px; margin-top: 8px; background: #333; color: #fff; font-size: 18.5px; font-weight: 700; line-height: 45px; padding-left: 3px; white-space: nowrap; }
.c0 { background: #4e79a7; } .c1 { background: #a0cbe8; } .c2 { background: #f28e2b; } .c3 { background: #ffbe7d; }
.c4 { background: #59a14f; } .c5 { background: #8cd17d; } .c6 { background: #b6992d; } .c7 { background: #f1ce63; }
.c8 { background: #499894; } .c9 { background: #86bcb6; } .c10 { background: #e15759; } .c11 { background: #ff9d9a; }
.c12 { background: #79706e; } .c13 { background: #bab0ac; } .c14 { background: #d37295; } .c15 { background: #fabfd2; }
.c16 { background: #b07aa1; } .c17 { background: #d4a6c8; } .c18 { background: #9d7660; } .c19 { background: #d7b5a6; }

.tabs { height: 38px; flex: none; background: #e5e5e5; border-top: 1px solid #c6c6c6; display: grid; font-size: 15px; color: #666; letter-spacing: -.08px;
  grid-template-columns: 163px 69px 70px 70px 71px 70px 70px 69px 70px 70px 121px 125px 124px 125px 83px 32px 32px 32px 1fr; }
.tabs div { border-right: 1px solid #c8c8c8; display: flex; align-items: center; padding: 0 0 2px 8px; white-space: nowrap; }
.tabs div:nth-child(-n+10) { padding-left: 7px; }
.tabs div:first-child { padding-left: 10px; }
.tabs div:last-child { border: 0; }
.tabs svg { margin-right: 4px; }
.tabs .add { padding-left: 9px; }
.tabs .cur { background: #fafafa; font-weight: 600; color: #444; letter-spacing: -.2px; }
.status { height: 25px; flex: none; background: #eaeaea; border-top: 1px solid #d0d0d0; display: flex; align-items: center; font-size: 13px; color: #222; padding-left: 3px; letter-spacing: -.05px; }
.status > span { width: 77px; white-space: nowrap; padding-bottom: 2px; }
.status .size-note { width: 120px; letter-spacing: -.35px; }
.status > div { height: 24px; border-left: 1px solid #ccc; width: 32px; display: flex; align-items: center; flex: none; padding-bottom: 1px; }
.status .user { margin-left: auto; width: 157px; padding: 0 10px 1px 6px; }
.user span { margin-left: 9px; flex: 1; }
.user .caret { width: 8px; height: 6px; background: #111; }
.status .user + div { width: 33px; }
.status .user + div + div + div { width: 56px; }
.status .nav { width: 71px; padding-left: 7px; }
.status .views { width: 70px; padding-left: 7px; }
```
